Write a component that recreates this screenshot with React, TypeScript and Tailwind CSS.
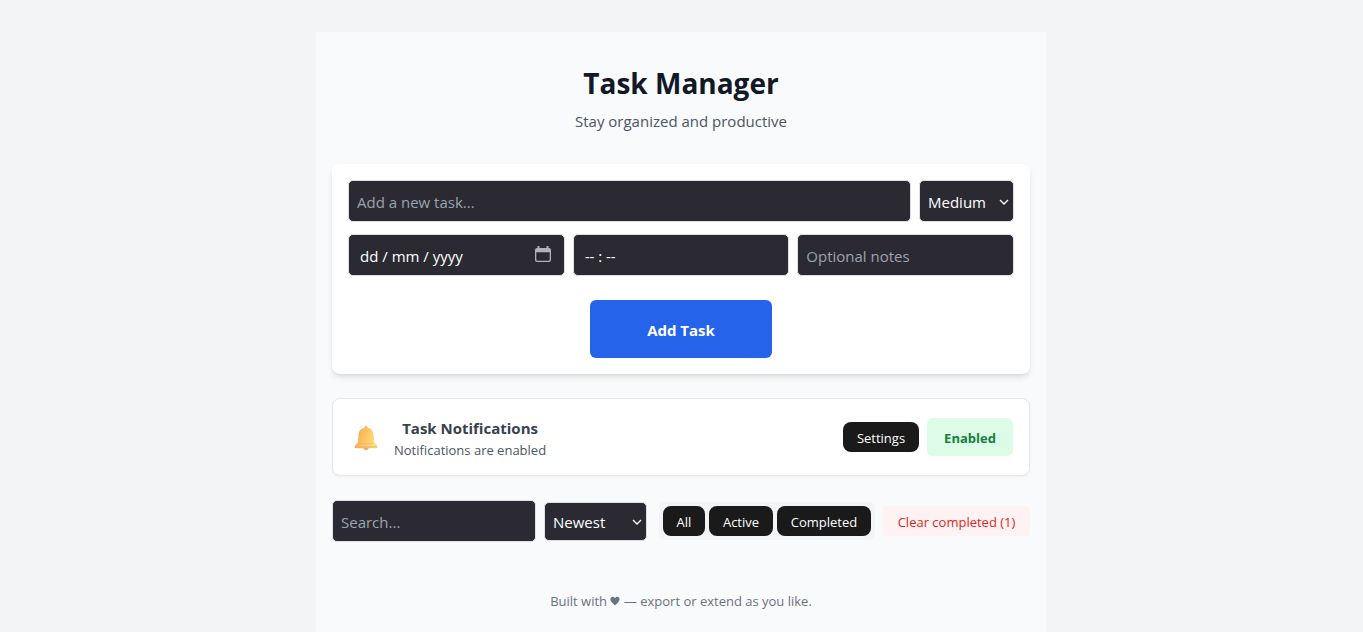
import { useState } from "react";

const field =
  "min-w-0 rounded-[5px] border border-[#dcdfe4] bg-[#2b2a33] px-2 pt-0.5 text-[15px] leading-6 text-white";
const muted = "placeholder:text-[#9ca3af]";
const darkButton =
  "flex h-[30px] items-center justify-center rounded-lg bg-[#1a1a1a] pt-0.5 text-[13px] leading-5 text-white";

function Chevron() {
  return (
    <svg
      className="pointer-events-none absolute top-1/2 right-1 -mt-[5px] size-3"
      viewBox="0 0 12 12"
      fill="none"
      stroke="#fff"
      strokeWidth="1.3"
      aria-hidden="true"
    >
      <path d="M2 4l4 4 4-4" />
    </svg>
  );
}

function CalendarIcon() {
  return (
    <svg viewBox="0 0 16 16" className="size-4" aria-hidden="true">
      <path
        d="M2.500 2V0h2v2h7V0h2v2H14a2 2 0 0 1 2 2v10a2 2 0 0 1-2 2H2a2 2 0 0 1-2-2V4a2 2 0 0 1 2-2zM1.300 6.200v7.500a1 1 0 0 0 1 1h11.400a1 1 0 0 0 1-1V6.200z"
        fill="#b2b2b6"
        fillRule="evenodd"
      />
    </svg>
  );
}

function Bell() {
  return (
    <svg viewBox="0 0 24 26" className="h-[26px] w-6 shrink-0" aria-hidden="true">
      <defs>
        <linearGradient id="bell" x1="0" y1="0" x2="1" y2="0.3">
          <stop offset="0" stopColor="#f2a060" />
          <stop offset="0.5" stopColor="#fbc25d" />
          <stop offset="1" stopColor="#fddc7c" />
        </linearGradient>
      </defs>
      <circle cx="12" cy="22.300" r="2.600" fill="#ec9a6c" />
      <path
        d="M12 .8c1 0 1.500.8 1.600 1.700 3.500.8 5.600 3.700 5.900 7.500l.5 6c.1 1.600.8 2.500 2 3.600.8.8 1.400 1.600 1.400 2.700 0 .6-.5.9-1.200.9H1.800c-.7 0-1.200-.3-1.200-.9 0-1.100.6-1.900 1.400-2.700 1.200-1.100 1.900-2 2-3.600l.5-6c.3-3.800 2.400-6.700 5.900-7.500C10.500 1.600 11 .8 12 .8z"
        fill="url(#bell)"
      />
      <path d="M1.300 21.600h21.400l.7 1H.6z" fill="#e99a68" opacity=".6" />
      <path d="M4 18c5 1.200 11 1.200 16 0" stroke="#f3a552" strokeWidth=".8" fill="none" opacity=".6" />
    </svg>
  );
}

function Heart() {
  return (
    <svg viewBox="0 0 10 10" className="inline size-2.5 align-baseline" fill="currentColor" role="img" aria-label="love">
      <path d="M5 9.500C3.600 8 .4 5.800.4 3.100.4 1.600 1.500.7 2.700.7 3.700.7 4.600 1.300 5 2.200 5.400 1.300 6.300.7 7.300.7c1.200 0 2.300.9 2.300 2.400C9.600 5.800 6.400 8 5 9.500z" />
    </svg>
  );
}

export default function App() {
  const [task, setTask] = useState("");
  const [notes, setNotes] = useState("");
  const [search, setSearch] = useState("");

  return (
    <div className="min-h-screen bg-[#f3f4f6] pt-8 pr-px font-['Open_Sans','Noto_Sans',sans-serif]">
      <main className="mx-auto min-h-[calc(100vh-32px)] max-w-[730px] bg-[#f9fafc] px-4 pt-8 pb-5">
        <header className="mb-[31px] text-center">
          <h1 className="text-[28px] leading-[38px] font-bold text-[#111827]">Task Manager</h1>
          <p className="mt-[7px] text-[15px] leading-6 text-[#4b5563]">Stay organized and productive</p>
        </header>

        <form
          className="mb-6 rounded-lg bg-white p-4 shadow-md"
          onSubmit={(e) => e.preventDefault()}
        >
          <div className="mb-3 flex gap-2">
            <input
              className={`${field} ${muted} h-[42px] flex-1`}
              aria-label="New task"
              placeholder="Add a new task..."
              value={task}
              onChange={(e) => setTask(e.target.value)}
            />
            <div className="relative">
              <select
                className={`${field} h-[42px] w-[95px] appearance-none`}
                aria-label="Priority"
                defaultValue="Medium"
              >
                <option>Low</option>
                <option>Medium</option>
                <option>High</option>
              </select>
              <Chevron />
            </div>
          </div>
          <div className="mb-6 grid grid-cols-3 gap-2">
            <div className="relative flex">
              <input
                className={`${field} h-[42px] w-full pl-[11px] placeholder:text-white`}
                aria-label="Due date"
                placeholder="dd / mm / yyyy"
              />
              <button
                type="button"
                aria-label="Open calendar"
                className="absolute top-3 right-3.5"
              >
                <CalendarIcon />
              </button>
            </div>
            <input
              className={`${field} h-[42px] pl-[11px] placeholder:text-white`}
              aria-label="Due time"
              placeholder="-- : --"
            />
            <input
              className={`${field} ${muted} h-[42px]`}
              aria-label="Notes"
              placeholder="Optional notes"
              value={notes}
              onChange={(e) => setNotes(e.target.value)}
            />
          </div>
          <button
            type="submit"
            className="mx-auto flex h-[58px] w-[182px] items-center justify-center rounded-md bg-[#2563eb] pt-0.5 text-[15px] leading-6 font-bold text-white"
          >
            Add Task
          </button>
        </form>

        <section className="mb-6 flex h-[78px] items-center rounded-lg border border-[#e5e7eb] bg-white px-4 shadow-xs">
          <div className="ml-[5px] flex items-center gap-4 pt-0.5">
            <Bell />
            <div className="text-center">
              <h2 className="text-[15px] leading-6 font-bold text-[#374151]">Task Notifications</h2>
              <p className="text-[13px] leading-5 text-[#4b5563]">Notifications are enabled</p>
            </div>
          </div>
          <div className="ml-auto flex items-center gap-2">
            <button type="button" className={`${darkButton} w-[76px]`}>
              Settings
            </button>
            <button
              type="button"
              className="flex h-[38px] w-[86px] items-center justify-center rounded-md bg-[#dcfce7] pt-0.5 text-[13px] leading-5 font-bold text-[#15803d]"
            >
              Enabled
            </button>
          </div>
        </section>

        <div className="flex items-center">
          <input
            className={`${field} ${muted} mr-2 h-[42px] flex-1`}
            aria-label="Search tasks"
            placeholder="Search..."
            value={search}
            onChange={(e) => setSearch(e.target.value)}
          />
          <div className="relative mr-3">
            <select
              className={`${field} block h-[39px] w-[103px] appearance-none`}
              aria-label="Sort order"
              defaultValue="Newest"
            >
              <option>Newest</option>
              <option>Oldest</option>
            </select>
            <Chevron />
          </div>
          <div className="mr-2 flex gap-1 rounded-md bg-[#f3f4f6] p-1">
            <button type="button" className={`${darkButton} w-[42px]`}>
              All
            </button>
            <button type="button" className={`${darkButton} w-16`}>
              Active
            </button>
            <button type="button" className={`${darkButton} w-[94px]`}>
              Completed
            </button>
          </div>
          <button
            type="button"
            className="flex h-[30px] w-[147px] items-center justify-center rounded bg-[#fef2f2] pt-0.5 text-[13px] leading-5 text-[#dc2626]"
          >
            Clear completed (1)
          </button>
        </div>

        <footer className="mt-12 pt-px text-center text-[13px] leading-5 text-[#6b7280]">
          Built with <Heart /> — export or extend as you like.
        </footer>
      </main>
    </div>
  );
}
